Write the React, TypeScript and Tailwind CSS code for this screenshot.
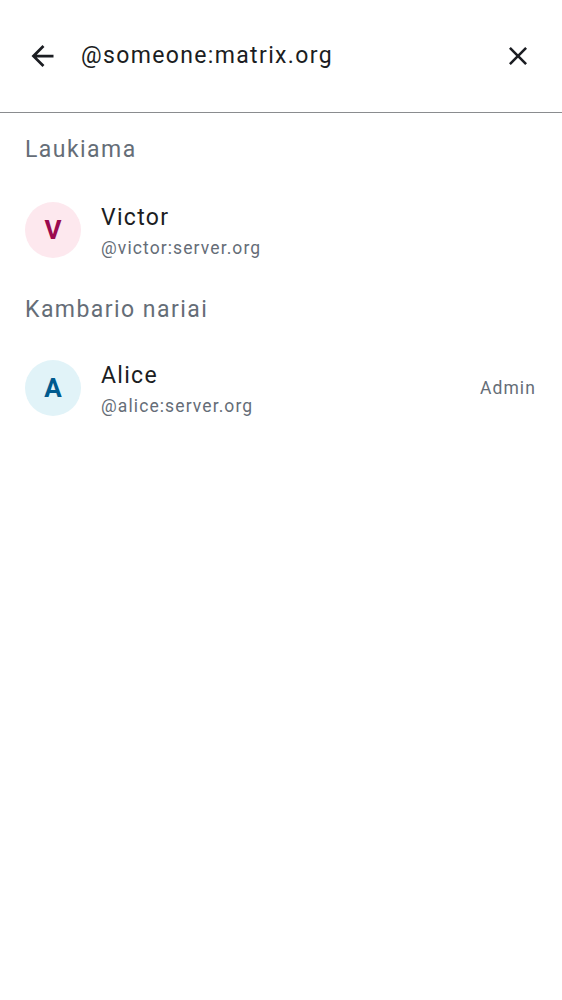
import React from "react";

function Row({ letter, name, handle, bg, fg, badge }: { letter: string; name: string; handle: string; bg: string; fg: string; badge?: string }) {
  return (
    <div className="flex items-center h-[88px] pl-[25px] pr-[26px]">
      <div className={`w-[56px] h-[56px] rounded-full flex items-center justify-center text-[26px] font-bold ${bg} ${fg}`}>{letter}</div>
      <div className="flex-1 ml-[20px] pt-[5px] flex flex-col">
        <div className="text-[23px] leading-[28px] tracking-[1.3px] text-[#1b1d22]">{name}</div>
        <div className="mt-[2px] text-[17.5px] leading-[28px] text-[#656d77] tracking-[1.1px]">{handle}</div>
      </div>
      {badge && <div className="text-[17.5px] text-[#656d77] tracking-[1.1px]">{badge}</div>}
    </div>
  );
}

export default function App() {
  return (
    <div className="w-[562px] h-[1000px] bg-white" style={{ fontFamily: "Roboto, sans-serif" }}>
      <div className="h-[112px] flex items-center">
        <div className="w-[81px] flex items-center pl-[31px]">
          <svg width="23" height="22" viewBox="4 4 16 16" fill="#1b1d22">
            <path d="M20 11H7.83l5.59-5.59L12 4l-8 8 8 8 1.41-1.41L7.83 13H20v-2z" />
          </svg>
        </div>
        <div className="flex-1 text-[23px] tracking-[1.35px] text-[#1b1d22]">@someone:matrix.org</div>
        <div className="pr-[35px]">
          <svg width="18" height="18" viewBox="5 5 14 14" fill="#1b1d22">
            <path d="M19 6.41 17.59 5 12 10.59 6.41 5 5 6.41 10.59 12 5 17.59 6.41 19 12 13.41 17.59 19 19 17.59 13.41 12z" />
          </svg>
        </div>
      </div>
      <div className="h-px bg-[#8a8c8f]" />
      <div className="h-[73px] flex items-center pl-[25px] pt-[2px] text-[23px] tracking-[1.45px] text-[#656d77]">Laukiama</div>
      <Row letter="V" name="Victor" handle="@victor:server.org" bg="bg-[#fde8ee]" fg="text-[#9b0a4f]" />
      <div className="h-[70px] flex items-center pl-[25px] pt-[2px] text-[23px] tracking-[1.45px] text-[#656d77]">Kambario nariai</div>
      <Row letter="A" name="Alice" handle="@alice:server.org" bg="bg-[#e1f3f8]" fg="text-[#005a8e]" badge="Admin" />
    </div>
  );
}
